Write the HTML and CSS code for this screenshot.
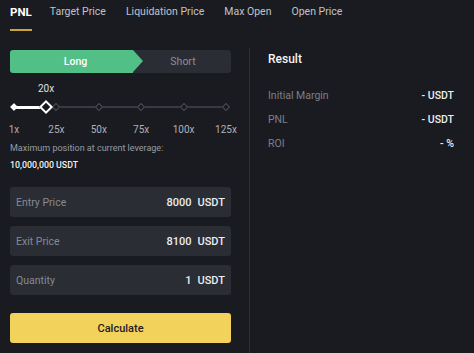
FILE: index.html
```html
<!DOCTYPE html>
<html>
<head>
<meta charset="utf-8">
<link rel="stylesheet" href="styles.css">
</head>
<body>
<nav class="tabs">
  <div class="tab active">PNL</div>
  <div class="tab">Target Price</div>
  <div class="tab">Liquidation Price</div>
  <div class="tab">Max Open</div>
  <div class="tab">Open Price</div>
</nav>
<main class="main">
  <section class="left">
    <div class="toggle">
      <div class="long">Long</div>
      <div class="short">Short</div>
    </div>
    <div class="lev-value">20x</div>
    <div class="slider">
      <div class="track"></div>
      <div class="track-active"></div>
      <div class="marks">
        <span class="mark first"></span>
        <span class="mark"></span>
        <span class="mark"></span>
        <span class="mark"></span>
        <span class="mark"></span>
        <span class="mark"></span>
      </div>
      <div class="thumb"></div>
    </div>
    <div class="labels">
      <span class="lbl"><span>1x</span></span>
      <span class="lbl"><span>25x</span></span>
      <span class="lbl"><span>50x</span></span>
      <span class="lbl"><span>75x</span></span>
      <span class="lbl"><span>100x</span></span>
      <span class="lbl"><span>125x</span></span>
    </div>
    <div class="maxpos">Maximum position at current leverage:</div>
    <div class="maxval">10,000,000 USDT</div>
    <div class="field"><span class="f-label">Entry Price</span><span class="f-val">8000<span class="unit">USDT</span></span></div>
    <div class="field"><span class="f-label">Exit Price</span><span class="f-val">8100<span class="unit">USDT</span></span></div>
    <div class="field"><span class="f-label">Quantity</span><span class="f-val">1<span class="unit">USDT</span></span></div>
    <button class="calc">Calculate</button>
  </section>
  <div class="divider"></div>
  <section class="right">
    <h2 class="r-title">Result</h2>
    <div class="r-row"><span class="r-label">Initial Margin</span><span class="r-val">- USDT</span></div>
    <div class="r-row"><span class="r-label">PNL</span><span class="r-val">- USDT</span></div>
    <div class="r-row"><span class="r-label">ROI</span><span class="r-val">- %</span></div>
  </section>
</main>
</body>
</html>
```
FILE: styles.css
```css
* { box-sizing: border-box; }
html, body {
  margin: 0;
  padding: 0;
  background: #1a1b21;
  font-family: Roboto, "Noto Sans", sans-serif;
  color: #e8e9ec;
  width: 474px;
  height: 353px;
  overflow: hidden;
}
.tabs {
  display: flex;
  gap: 20px;
  padding-left: 10px;
  height: 32px;
}
.tab {
  font-size: 10.5px;
  line-height: 24px;
  color: #c0c3c9;
  position: relative;
}
.tab.active {
  color: #ffffff;
  font-weight: 700;
  font-size: 11.5px;
  margin-right: -2px;
}
.tab.active::after {
  content: "";
  position: absolute;
  left: 0;
  right: 0;
  top: 29px;
  height: 2px;
  background: #c9a53a;
}
.main {
  display: flex;
  padding-top: 18px;
}
.left {
  width: 221px;
  margin-left: 10px;
}
.toggle {
  display: flex;
  height: 23px;
  background: #2a2d34;
  border-radius: 3px;
  font-size: 10.5px;
  font-weight: 500;
}
.long {
  width: 123px;
  position: relative;
  background: #52bf87;
  color: #ffffff;
  border-radius: 3px 0 0 3px;
  display: flex;
  align-items: center;
  justify-content: center;
  padding-left: 8px;
}
.long::after {
  content: "";
  position: absolute;
  right: -10px;
  top: 0;
  border-top: 11.5px solid transparent;
  border-bottom: 11.5px solid transparent;
  border-left: 10px solid #52bf87;
}
.short {
  flex: 1;
  display: flex;
  align-items: center;
  justify-content: center;
  color: #8a8e96;
  font-weight: 400;
  padding-left: 2px;
}
.lev-value {
  font-size: 10px;
  color: #dfe1e5;
  margin-top: 10px;
  margin-left: 28px;
  line-height: 12px;
}
.slider {
  position: relative;
  margin-left: 4px;
  width: 212px;
  height: 12px;
  margin-top: 6px;
}
.track {
  position: absolute;
  left: 0;
  right: 0;
  top: 5px;
  height: 2px;
  background: #373a42;
}
.track-active {
  position: absolute;
  left: 0;
  width: 32px;
  top: 4.5px;
  height: 3px;
  background: #ffffff;
}
.marks {
  position: absolute;
  left: -3px;
  right: -3px;
  top: 3px;
  display: flex;
  justify-content: space-between;
}
.mark {
  width: 6px;
  height: 6px;
  transform: rotate(45deg);
  border: 1.5px solid #4a4d55;
  background: #1a1b21;
}
.mark.first {
  background: #ffffff;
  border-color: #ffffff;
  transform: rotate(45deg) scale(0.9);
}
.thumb {
  position: absolute;
  left: 27px;
  top: 1px;
  width: 10px;
  height: 10px;
  transform: rotate(45deg);
  border: 2px solid #ffffff;
  background: #1a1b21;
}
.labels {
  display: flex;
  justify-content: space-between;
  margin-left: 4px;
  width: 212px;
  margin-top: 10px;
  font-size: 10px;
  color: #aeb1b8;
  line-height: 14px;
}
.lbl {
  width: 0;
  display: flex;
  justify-content: center;
  white-space: nowrap;
}
.maxpos {
  font-size: 9px;
  color: #989ba2;
  margin-top: 4px;
  line-height: 14px;
}
.maxval {
  font-size: 8.8px;
  font-weight: 500;
  color: #f0f1f3;
  margin-top: 3px;
  line-height: 14px;
}
.field {
  display: flex;
  justify-content: space-between;
  align-items: center;
  height: 30px;
  background: #2a2d34;
  border-radius: 3px;
  padding: 0 6px 0 6px;
  margin-top: 9px;
  font-size: 10.5px;
}
.maxval + .field { margin-top: 15px; }
.f-label { color: #868a92; }
.f-val { color: #eceef1; font-weight: 500; font-size: 11px; }
.unit { margin-left: 6px; }
.calc {
  display: block;
  width: 100%;
  height: 30px;
  margin-top: 18px;
  border: 0;
  border-radius: 3px;
  background: #f2d25a;
  color: #1e2026;
  font-family: inherit;
  font-size: 11px;
  font-weight: 500;
  padding: 0;
}
.divider {
  width: 1px;
  background: #2c2f36;
  margin-left: 18px;
  height: 305px;
  margin-top: -2px;
}
.right {
  margin-left: 18px;
  width: 186px;
}
.r-title {
  margin: 0;
  font-size: 12px;
  font-weight: 500;
  color: #f3f4f6;
  line-height: 16px;
  margin-top: 1px;
}
.r-row {
  display: flex;
  justify-content: space-between;
  font-size: 10.5px;
  line-height: 14px;
  margin-top: 10px;
}
.r-title + .r-row { margin-top: 22px; }
.r-label { color: #7b7f88; }
.r-val { color: #eceef1; font-weight: 500; }
```
